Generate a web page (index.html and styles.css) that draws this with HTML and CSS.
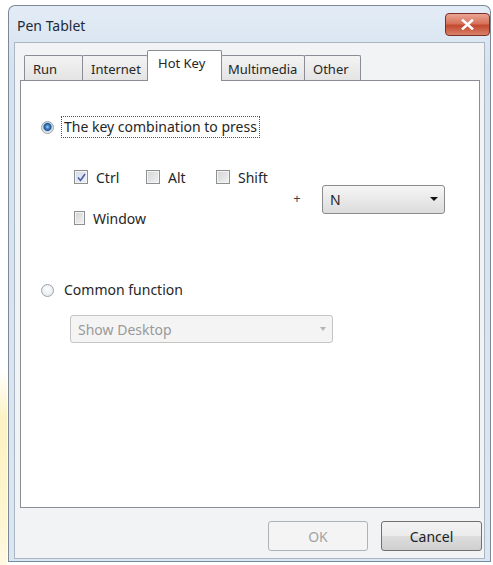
FILE: index.html
```html
<!DOCTYPE html>
<html lang="en">

<head>
    <meta charset="UTF-8" />
    <title>Pen Tablet</title>
    <link rel="stylesheet" href="styles.css">
</head>

<body>
    <div class="window">
        <div class="titlebar">
            <span class="title">Pen Tablet</span>
            <button class="close" title="Close">
                <svg width="13" height="11" viewBox="0 0 13 11">
                    <path d="M2 1.5 L11 9.5 M11 1.5 L2 9.5" stroke="#fff" stroke-width="2.6" stroke-linecap="square" />
                </svg>
            </button>
        </div>

        <div class="client">
            <div class="tabs">
                <div class="tab tab-run">Run</div>
                <div class="tab tab-internet">Internet</div>
                <div class="tab tab-hotkey active">Hot Key</div>
                <div class="tab tab-multimedia">Multimedia</div>
                <div class="tab tab-other">Other</div>
            </div>

            <div class="panel">
                <label class="option">
                    <span class="radio checked"></span>
                    <span class="option-text focused">The key combination to press</span>
                </label>

                <div class="keys">
                    <div class="modifiers">
                        <label class="check"><span class="box checked">
                            <svg width="11" height="11" viewBox="0 0 11 11">
                                <path d="M2 5.5 L4.5 8.5 L9 2" fill="none" stroke="#4d5ea8" stroke-width="1.6" />
                            </svg>
                        </span>Ctrl</label>
                        <label class="check"><span class="box"></span>Alt</label>
                        <label class="check"><span class="box"></span>Shift</label>
                        <label class="check"><span class="box"></span>Window</label>
                    </div>
                    <span class="plus">+</span>
                    <div class="combo">
                        <span>N</span>
                        <span class="arrow"></span>
                    </div>
                </div>

                <label class="option option-common">
                    <span class="radio"></span>
                    <span class="option-text">Common function</span>
                </label>

                <div class="combo combo-disabled">
                    <span>Show Desktop</span>
                    <span class="arrow"></span>
                </div>
            </div>

            <div class="buttons">
                <button class="btn" disabled>OK</button>
                <button class="btn">Cancel</button>
            </div>
        </div>
    </div>
</body>

</html>
```

FILE: styles.css
```css
html,
body {
    height: 100%;
}

body {
    margin: 0;
    padding: 5px 2px 0 8px;
    box-sizing: border-box;
    font-family: "Noto Sans", "Open Sans", sans-serif;
    font-size: 14px;
    color: #262626;
    background:
        linear-gradient(#fff 370px, #fcf2c2 420px, #fdf5cc 500px, #fef9e2 565px) no-repeat 0 0 / 7px 100%,
        #fff;
}

.window {
    width: 483px;
    height: 557px;
    box-sizing: border-box;
    border: 1px solid #7b8896;
    border-bottom-color: #6f8aa3;
    border-radius: 7px 7px 0 0;
    background: linear-gradient(#e3ecf6, #d6e2ef 60px, #dce6f1);
    display: flex;
    flex-direction: column;
}

.titlebar {
    height: 36px;
    flex-shrink: 0;
    display: flex;
    align-items: flex-start;
    justify-content: space-between;
    padding-left: 8px;
}

.title {
    margin-top: 10px;
    font-size: 14px;
    color: #1d2b3a;
}

.close {
    margin-top: 7px;
    width: 45px;
    height: 23px;
    padding: 0;
    border: 1px solid #7a3024;
    border-radius: 4px;
    background: linear-gradient(#eba594, #d7735c 45%, #c24a30 55%, #d9816b);
    display: flex;
    align-items: center;
    justify-content: center;
}

.client {
    flex: 1;
    margin: 0 5px 2px 5px;
    border: 1px solid #aab6c3;
    background: #f2f3f4;
    display: flex;
    flex-direction: column;
}

/* tab strip */

.tabs {
    display: flex;
    align-items: flex-end;
    height: 30px;
    margin: 7px 0 0 9px;
    font-size: 13px;
}

.tab {
    height: 25px;
    box-sizing: border-box;
    padding: 4px 0 0 8px;
    margin-right: -1px;
    border: 1px solid #8a8d95;
    border-bottom: none;
    border-radius: 2px 2px 0 0;
    background: linear-gradient(#f3f3f3, #e4e4e4);
    white-space: nowrap;
}

.tab-run { width: 59px; }
.tab-internet { width: 66px; }
.tab-hotkey { width: 75px; }
.tab-multimedia { width: 84px; padding-left: 6px; }
.tab-other { width: 57px; }

.tab.active {
    height: 31px;
    margin-bottom: -1px;
    padding: 3px 0 0 10px;
    background: #fff;
    position: relative;
    z-index: 1;
}

.panel {
    flex: 1;
    margin: 0 4px 0 5px;
    border: 1px solid #8a8d95;
    background: #fff;
    padding: 35px 0 0 20px;
}

/* radio options */

.option {
    display: flex;
    align-items: center;
    height: 22px;
}

.radio {
    width: 13px;
    height: 13px;
    box-sizing: border-box;
    border-radius: 50%;
    border: 1px solid #9aa3ad;
    background: radial-gradient(circle at 50% 40%, #fdfdfd, #e1e4e8);
    margin-right: 7px;
    flex-shrink: 0;
}

.radio.checked {
    background: radial-gradient(circle at 50% 45%, #a9d4f3 0, #3b7fc2 2px, #1f5592 3.5px, #c7d1dc 4.5px, #eef1f5 6px);
}

.option-text {
    padding: 0 2px;
    line-height: 20px;
    border: 1px solid transparent;
}

.option-text.focused {
    border: 1px dotted #555;
}

.option-common {
    margin-top: 52px;
}

/* hot key modifiers */

.keys {
    display: flex;
    align-items: center;
    margin: 30px 0 0 33px;
}

.modifiers {
    display: grid;
    grid-template-columns: 72px 70px 60px;
    row-gap: 23px;
}

.check {
    display: flex;
    align-items: center;
    height: 18px;
    white-space: nowrap;
}

.box {
    width: 14px;
    height: 14px;
    box-sizing: border-box;
    border: 1px solid #8e8f8f;
    background: linear-gradient(135deg, #d2d4d6, #f1f2f3);
    box-shadow: inset 0 0 0 1px #f4f4f4;
    margin-right: 8px;
    display: flex;
    align-items: center;
    justify-content: center;
}

.box.checked {
    background: linear-gradient(135deg, #d4daea, #eef1f8);
}

.plus {
    margin: 0 0 0 17px;
    width: 8px;
    font-size: 13px;
    color: #444;
    text-align: center;
}

.combo {
    width: 123px;
    height: 29px;
    box-sizing: border-box;
    margin-left: 21px;
    padding: 0 6px 0 7px;
    border: 1px solid #8b8b8b;
    border-radius: 3px;
    background: linear-gradient(#f6f6f6, #e9e9e9 50%, #dcdcdc);
    display: flex;
    align-items: center;
    justify-content: space-between;
    margin-top: 3px;
}

.arrow {
    width: 0;
    height: 0;
    border-left: 4px solid transparent;
    border-right: 4px solid transparent;
    border-top: 4px solid #111;
}

.combo-disabled {
    width: 263px;
    height: 28px;
    margin: 14px 0 0 29px;
    border-color: #c4c4c4;
    background: #f4f4f4;
    color: #9a9a9a;
}

.combo-disabled .arrow {
    border-width: 4px 3px 0 3px;
    border-top-color: #b5b5b5;
}

/* dialog buttons */

.buttons {
    display: flex;
    justify-content: flex-end;
    gap: 13px;
    margin: 13px 2px 7px 0;
}

.btn {
    width: 101px;
    height: 30px;
    font-family: inherit;
    font-size: 14px;
    color: #222;
    border: 1px solid #707070;
    border-radius: 3px;
    background: linear-gradient(#f3f3f3, #ebebeb 50%, #dddddd 51%, #cfcfcf);
}

.btn:disabled {
    width: 100px;
    color: #a3a3a3;
    border-color: #adb2b5;
    background: #f4f4f4;
}
```
